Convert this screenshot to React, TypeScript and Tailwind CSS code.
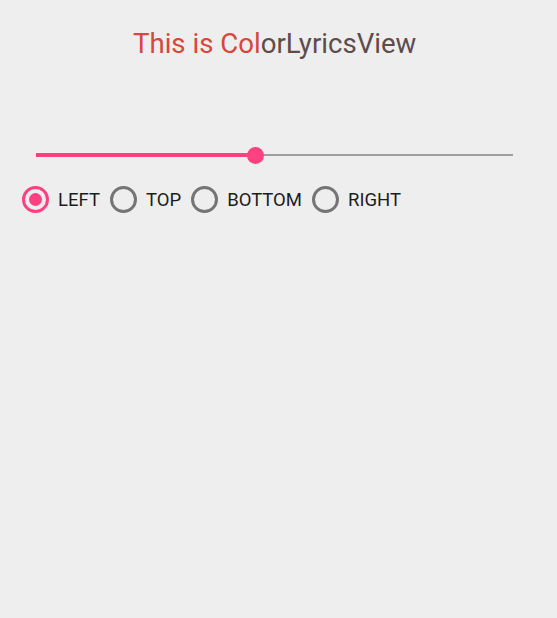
import React from "react";

function Radio({ label, checked }: { label: string; checked?: boolean }) {
  return (
    <div className="flex items-center mr-[10px]">
      <div
        className={
          "w-[27px] h-[27px] rounded-full border-[3px] flex items-center justify-center " +
          (checked ? "border-[#ff4081]" : "border-[#757575]")
        }
      >
        {checked && <div className="w-[13px] h-[13px] rounded-full bg-[#ff4081]" />}
      </div>
      <span className="ml-[9px] text-[18.5px] leading-[28px] pt-[2px] text-[#1c1c1c]">{label}</span>
    </div>
  );
}

export default function App() {
  return (
    <div
      className="w-[557px] h-[618px] bg-[#eeeeee] flex flex-col"
      style={{ fontFamily: "Roboto, 'Noto Sans', sans-serif" }}
    >
      <div className="pt-[28px] pl-[133px] text-[27.6px] leading-[32px] whitespace-nowrap">
        <span className="text-[#d9463a]">This is Col</span>
        <span className="text-[#5f4b4b]">orLyricsView</span>
      </div>

      <div className="relative mt-[85px] ml-[36px] mr-[44px] h-[20px] flex items-center">
        <div className="w-[219px] h-[4px] bg-[#ff4081]" />
        <div className="flex-1 h-[2px] bg-[#9e9e9e]" />
        <div className="absolute left-[211px] top-[2px] w-[17px] h-[17px] rounded-full bg-[#ff4081]" />
      </div>

      <div className="mt-[20px] pl-[22px] flex items-center h-[28px]">
        <Radio label="LEFT" checked />
        <Radio label="TOP" />
        <Radio label="BOTTOM" />
        <Radio label="RIGHT" />
      </div>
    </div>
  );
}
